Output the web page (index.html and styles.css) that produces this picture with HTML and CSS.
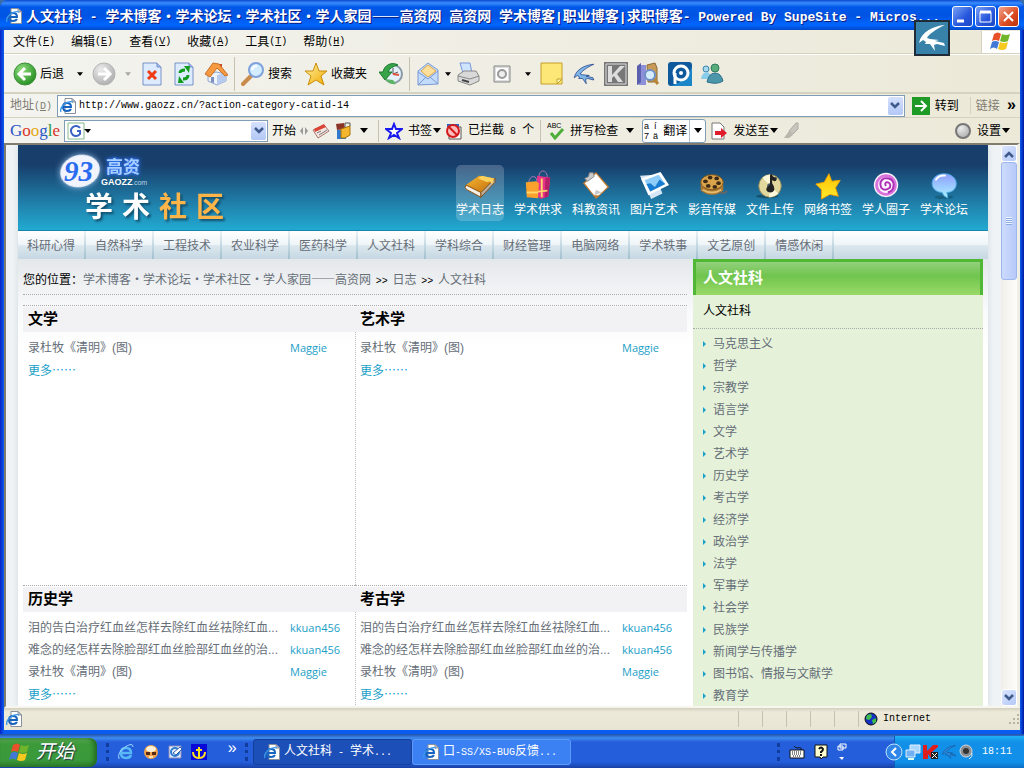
FILE: index.html
```html
<!DOCTYPE html>
<html lang="zh-CN">
<head>
    <meta charset="UTF-8">
    <meta name="viewport" content="width=device-width, initial-scale=1.0">
    <title>人文社科 - 学术博客</title>
    <link rel="stylesheet" href="styles.css">
</head>
<body>
    <!-- shared icons -->
    <svg class="defs" width="0" height="0">
        <defs>
            <linearGradient id="gold" x1="0" y1="0" x2="1" y2="1"><stop offset="0" stop-color="#fff3a0"/><stop offset="1" stop-color="#f0a800"/></linearGradient>
            <linearGradient id="star" x1="0" y1="0" x2="0" y2="1"><stop offset="0" stop-color="#ffc400"/><stop offset="1" stop-color="#ffe92e"/></linearGradient>
            <linearGradient id="orange" x1="0" y1="0" x2="1" y2="1"><stop offset="0" stop-color="#f7b733"/><stop offset="1" stop-color="#c06c0a"/></linearGradient>
            <linearGradient id="sky" x1="0" y1="0" x2="0" y2="1"><stop offset="0" stop-color="#8f9dff"/><stop offset="1" stop-color="#a8f4ff"/></linearGradient>
            <radialGradient id="green" cx=".35" cy=".3" r=".8"><stop offset="0" stop-color="#8fdc7d"/><stop offset="1" stop-color="#1d8a1b"/></radialGradient>
            <radialGradient id="grey" cx=".35" cy=".3" r=".8"><stop offset="0" stop-color="#ececec"/><stop offset="1" stop-color="#a9a9a9"/></radialGradient>
            <symbol id="ie" viewBox="0 0 16 16">
                <path d="M5 .5h7l3.500 3.500v11.500H5z" fill="#fff" stroke="#8a8f9c"/>
                <path d="M12 .5v3.500h3.500z" fill="#c9cfdd" stroke="#8a8f9c"/>
                <path d="M3 9h8q0-4-4-4t-4 4 4 4q3 0 4-2" fill="none" stroke="#1663c0" stroke-width="2"/>
                <path d="M1 14C-1 9 7 2 13 4" fill="none" stroke="#3a97e8" stroke-width="1.300"/>
            </symbol>
            <symbol id="flag" viewBox="0 0 22 20">
                <path d="M4 3q4-3 7 0l-2 7q-4-2-7 0z" fill="#e8502a"/>
                <path d="M12 3q4 2 8 0l-2 7q-4 2-8 0z" fill="#71b52b"/>
                <path d="M2 11q3-2 7 0l-2 7q-3-3-7 0z" fill="#4379d6"/>
                <path d="M10 11q4 2 8 0l-2 7q-4 2-8 0z" fill="#f7c81e"/>
            </symbol>
            <symbol id="swallow" viewBox="0 0 32 32">
                <path d="M29 3C17 4 5 10 3 21l4-3 3 2-1 2 5 0 5 7-1-6 3-1 8 2-1-3-9-2 4-1-9-1-3-1C12 13 20 7 29 3z"/>
            </symbol>
            <symbol id="down" viewBox="0 0 8 5"><path d="M0 0h8L4 5z"/></symbol>
            <symbol id="chev" viewBox="0 0 10 8"><path d="M1 1l4 4 4-4" fill="none" stroke="#3f5a8c" stroke-width="2.500"/></symbol>
        </defs>
    </svg>

    <div class="window">
        <header class="titlebar">
            <svg class="i16"><use href="#ie"/></svg>
            <h1>人文社科<span class="tl"> - </span>学术博客・学术论坛・学术社区・学人家园——高资网<span class="tl"> </span>高资网<span class="tl"> </span>学术博客<span class="tl">|</span>职业博客<span class="tl">|</span>求职博客<span class="tl">- Powered By SupeSite - Micros...</span></h1>
            <div class="win-buttons">
                <button aria-label="最小化"><svg width="19" height="19"><path d="M4 14h7" stroke="#fff" stroke-width="3"/></svg></button>
                <button aria-label="最大化"><svg width="19" height="19"><path d="M4 5h11v10H4z" fill="none" stroke="#fff"/><path d="M4 5h11" stroke="#fff" stroke-width="3"/></svg></button>
                <button class="close" aria-label="关闭"><svg width="19" height="19"><path d="M5 5l9 9M14 5l-9 9" stroke="#fff" stroke-width="2"/></svg></button>
            </div>
        </header>
        <div class="bird"><svg width="32" height="32" fill="#fff"><use href="#swallow"/></svg></div>

        <nav class="menubar">
            <button>文件<span class="l">(<u>F</u>)</span></button>
            <button>编辑<span class="l">(<u>E</u>)</span></button>
            <button>查看<span class="l">(<u>V</u>)</span></button>
            <button>收藏<span class="l">(<u>A</u>)</span></button>
            <button>工具<span class="l">(<u>T</u>)</span></button>
            <button>帮助<span class="l">(<u>H</u>)</span></button>
            <div class="throbber"><svg width="22" height="20"><use href="#flag"/></svg></div>
        </nav>

        <div class="toolbar">
            <button class="text"><svg class="i24"><circle cx="12" cy="12" r="11" fill="url(#green)" stroke="#3c8f38"/><path d="M18 12H7M12 6l-6 6 6 6" fill="none" stroke="#fff" stroke-width="3"/></svg>后退</button>
            <button class="arrow" aria-label="后退列表"><svg width="6" height="4"><use href="#down"/></svg></button>
            <button aria-label="前进"><svg class="i24"><circle cx="12" cy="12" r="11" fill="url(#grey)" stroke="#b5b5b5"/><path d="M6 12h11M12 6l6 6-6 6" fill="none" stroke="#fff" stroke-width="3"/></svg></button>
            <button class="arrow off" aria-label="前进列表"><svg width="6" height="4"><use href="#down"/></svg></button>
            <button aria-label="停止"><svg class="i24"><path d="M3 1h14l4 4v18H3z" fill="#dcebff" stroke="#7a90c8"/><path d="M17 1v4h4" fill="#9db9ee" stroke="#7a90c8"/><path d="M8 9l8 8M16 9l-8 8" stroke="#f03a12" stroke-width="3"/></svg></button>
            <button aria-label="刷新"><svg class="i24"><path d="M3 1h14l4 4v18H3z" fill="#dcebff" stroke="#7a90c8"/><path d="M17 1v4h4" fill="#9db9ee" stroke="#7a90c8"/><path d="M8 11q0-3 5-3M16 13q0 4-5 4" fill="none" stroke="#119c1a" stroke-width="3"/><path d="M12 4l6 0-1 7zM12 21l-6 0 1-7z" fill="#119c1a"/></svg></button>
            <button aria-label="主页"><svg class="i24"><path d="M15 2h3v7h-3z" fill="#c8452f"/><path d="M4 12l8-2 10 2v7l-9 4-9-4z" fill="#eef3fc" stroke="#8ea5d3"/><path d="M13 13l9-2v8l-9 4z" fill="#b8cbee"/><path d="M1 12L9 1l6 1 9 11-3 1-8-8-7 9z" fill="#f59a41" stroke="#c9702a"/><path d="M7 15h3v6l-3-1z" fill="#7d91bd"/></svg></button>
            <span class="sep"></span>
            <button class="text"><svg class="i24"><path d="M10 14l-8 8" stroke="#c98b4c" stroke-width="4" stroke-linecap="round"/><circle cx="15" cy="8" r="7" fill="#d3edff" stroke="#7fa2dc" stroke-width="2"/><path d="M11 8q1-4 5-4" fill="none" stroke="#fff" stroke-width="2"/></svg>搜索</button>
            <button class="text"><svg class="i24"><path d="M12 1l3 8 8 0-6 5 3 9-8-5-8 5 3-9-6-5 8 0z" fill="url(#gold)" stroke="#c98d0a"/></svg>收藏夹</button>
            <button aria-label="历史"><svg class="i24"><circle cx="14" cy="12" r="9" fill="#e4f1fb" stroke="#8b9aa7" stroke-width="2"/><path d="M14 6v6l5-2" fill="none" stroke="#555"/><path d="M14 12l6 1" stroke="#e0523a" stroke-width="2"/><path d="M19 3A10 10 0 0 0 4 10H0l6 8 7-8H9q2-5 10-7z" fill="#37a44a" stroke="#1d7a30"/><path d="M6 17q4 6 11 5l-3-4z" fill="#5bb565"/></svg></button>
            <span class="sep"></span>
            <button aria-label="邮件"><svg class="i24"><path d="M2 9L12 1l10 7v14L2 23z" fill="#c4dcfb" stroke="#7b98d4"/><path d="M5 9l7-6 8 6-8 6z" fill="#ffe09a" stroke="#e0a845"/><path d="M2 10l10 7L22 9M2 23l8-8M22 22l-8-7" fill="none" stroke="#7b98d4"/></svg></button>
            <button class="arrow slim" aria-label="邮件列表"><svg width="6" height="4"><use href="#down"/></svg></button>
            <button aria-label="打印"><svg class="i24"><path d="M4 1h10l2 10H7z" fill="#cfe4ff" stroke="#7795d8"/><path d="M2 13l6-4h12l3 5v5l-9 4-12-4z" fill="#d9d9d9" stroke="#888"/><path d="M2 14l12 3 9-3" fill="none" stroke="#888"/><path d="M6 18l7 2" stroke="#444" stroke-width="2"/></svg></button>
            <button class="wide" aria-label="编辑"><svg class="i24"><path d="M4 4h16v16H4z" fill="#dedede" stroke="#888"/><path d="M6 6h12v12H6z" fill="#fff"/><circle cx="12" cy="12" r="4" fill="#eee" stroke="#999" stroke-width="2"/></svg></button>
            <button class="arrow" aria-label="编辑列表"><svg width="6" height="4"><use href="#down"/></svg></button>
            <button aria-label="便笺"><svg class="i24"><path d="M1 1h21v21H1z" fill="#fde777" stroke="#c59e28"/><path d="M17 22v-5h5z" fill="#fff6bd" stroke="#c59e28"/></svg></button>
            <button aria-label="飞燕"><svg class="i24" fill="#7fb6e8" stroke="#1f3f87" stroke-width="1"><use href="#swallow"/></svg></button>
            <button aria-label="卡巴斯基"><svg class="i24"><path d="M1 1h22v22H1z" fill="#777" stroke="#777" stroke-width="2"/><path d="M2 2h20v20H2z" fill="none" stroke="#ddd"/><path d="M4 4h4v9l8-9h5l-8 8 6 8h-5l-4-6-2 2v4H4z" fill="#ddd"/></svg></button>
            <button aria-label="参考资料"><svg class="i24"><path d="M1 4l4-3v20l-4 2z" fill="#5a5fae"/><path d="M5 3h5v20H2l3-3z" fill="#8d90d8"/><path d="M11 3l8-2 2 5v14h-9z" fill="#c79a55" stroke="#8b6a34"/><path d="M17 16l5 6" stroke="#b9853b" stroke-width="3"/><circle cx="14" cy="13" r="5" fill="#d5ecff" stroke="#6c8fc6" stroke-width="2"/></svg></button>
            <button aria-label="PP"><svg class="i24"><rect width="24" height="24" rx="3" fill="#0f5a9c"/><path d="M2 24q14-3 22-19v19z" fill="#1c86c9"/><circle cx="13" cy="11" r="7" fill="none" stroke="#fff" stroke-width="3"/><circle cx="13" cy="11" r="2" fill="#fff"/><path d="M7 11v11" stroke="#fff" stroke-width="3"/></svg></button>
            <button aria-label="Messenger"><svg class="i24"><circle cx="6" cy="7" r="3" fill="#a5d8ee" stroke="#3a84a8"/><path d="M1 17q1-7 6-7 4 1 4 7z" fill="#8acdea"/><circle cx="15" cy="6" r="4" fill="#58ad7a" stroke="#2d7a5f"/><path d="M7 20q2-9 8-9 6 0 8 8-6 4-16 1z" fill="#4b96a8" stroke="#2e6f8d"/></svg></button>
        </div>

        <form class="address">
            <label for="url">地址<span class="l">(<u>D</u>)</span></label>
            <div class="combo">
                <svg class="i16"><use href="#ie"/></svg>
                <input type="text" id="url" value="http://www.gaozz.cn/?action-category-catid-14">
                <button type="button" aria-label="地址列表"><svg width="10" height="8"><use href="#chev"/></svg></button>
            </div>
            <button type="button" class="go"><svg width="18" height="18"><rect width="18" height="18" fill="#1f9a27"/><path d="M3 9h10M9 4l5 5-5 5" fill="none" stroke="#fff" stroke-width="2"/></svg>转到</button>
            <div class="links">链接 <b>»</b></div>
        </form>

        <div class="google">
            <label class="glogo" for="gq"><i>G</i><i>o</i><i>o</i><i>g</i><i>l</i><i>e</i></label>
            <div class="combo">
                <svg width="24" height="18"><path d="M1 1h16v16H1z" fill="#fff" stroke="#86b98b"/><path d="M13 6a5 5 0 1 0 0 6V9h-3" fill="none" stroke="#3a62c4" stroke-width="2"/><path d="M17 7h7l-3 4z"/></svg>
                <input type="text" id="gq">
                <button type="button" aria-label="搜索历史"><svg width="10" height="8"><use href="#chev"/></svg></button>
            </div>
            <button>开始</button>
            <svg width="8" height="8"><path d="M3 0v8L0 4zM5 0v8l3-4z" fill="#999"/></svg>
            <button aria-label="新闻"><svg class="i18"><path d="M1 8l11-5 5 6-11 7z" fill="#f5e4df" stroke="#a8766f"/><path d="M2 7l10-5 2 3-11 5z" fill="#d94436"/><path d="M7 13l8-5M5 11l4-2" stroke="#777"/></svg></button>
            <button aria-label="小工具"><svg class="i18"><path d="M2 2l8-1 1 6-8 1z" fill="#8c3426"/><path d="M3 8h9v9H3z" fill="#2f7ad0"/><path d="M7 7l9-3v9l-5 3H7z" fill="#f4b62c" stroke="#a8720b"/><path d="M11 5V1h5v3" fill="none" stroke="#555"/></svg></button>
            <button class="arrow" aria-label="更多工具"><svg width="8" height="5"><use href="#down"/></svg></button>
            <span class="sep"></span>
            <button><svg class="i18"><path d="M9 2l2 5 6 0-5 4 2 5-5-3-5 3 2-5-5-4 6 0z" fill="#fff" stroke="#1a1aee" stroke-width="2"/></svg><span>书签<svg width="8" height="5"><use href="#down"/></svg></span></button>
            <button><svg class="i18"><path d="M2 2h12v3H2z" fill="#2f62c0"/><path d="M4 5h12v12H4z" fill="#fff" stroke="#555"/><circle cx="8" cy="9" r="6" fill="#fbb" stroke="#d31b1b" stroke-width="2"/><path d="M4 5l8 8" stroke="#d31b1b" stroke-width="2"/></svg><span>已拦截<span class="l"> 8 </span>个</span></button>
            <span class="sep"></span>
            <button><svg class="i18"><text x="0" y="6" font-size="7" font-family="Liberation Sans">ABC</text><path d="M4 11l4 5 8-9" fill="none" stroke="#4fae3a" stroke-width="3"/></svg>拼写检查</button>
            <button class="arrow" aria-label="拼写选项"><svg width="8" height="5"><use href="#down"/></svg></button>
            <div class="translate">
                <button><svg class="i18"><g font-size="9" font-family="Liberation Sans"><text x="1" y="7">a</text><text x="11" y="7">í</text><text x="1" y="17">7</text><text x="10" y="17">ä</text></g></svg>翻译</button>
                <button class="arrow" aria-label="翻译选项"><svg width="8" height="5"><use href="#down"/></svg></button>
            </div>
            <button><svg class="i18"><path d="M2 1h8l4 4v12H2z" fill="#fff" stroke="#777"/><path d="M5 9h6V6l6 5-6 5v-3H5z" fill="#e01b2c"/></svg><span>发送至<svg width="8" height="5"><use href="#down"/></svg></span></button>
            <button aria-label="突出显示"><svg class="i18"><path d="M14 1h2v6l-5 5-4-3z" fill="#c8c5bb" stroke="#aaa"/><path d="M7 9l4 4-4 3H2z" fill="#b9b6ac"/></svg></button>
            <button class="settings"><svg class="i18"><circle cx="9" cy="9" r="7" fill="url(#grey)" stroke="#777" stroke-width="2"/></svg><span>设置<svg width="8" height="5"><use href="#down"/></svg></span></button>
        </div>

        <div class="viewport">
            <main class="page">
                <div class="banner">
                    <svg class="logo" width="180" height="76">
                        <ellipse class="oval" cx="25" cy="22" rx="20" ry="16" transform="rotate(-15 25 22)"/>
                        <text class="gz" x="9" y="32">93</text>
                        <text class="cn" x="51" y="24">高资</text>
                        <text class="en" x="46" y="36">GAOZZ</text>
                        <text class="com" x="77" y="36">.com</text>
                        <text class="big" x="30" y="68">学</text>
                        <text class="big" x="67" y="68">术</text>
                        <text class="big warm" x="104" y="68">社</text>
                        <text class="big warm" x="141" y="68">区</text>
                    </svg>
                    <nav class="channels">
                        <a class="on" href="#"><svg viewBox="0 0 34 32"><path d="M2 16l14-10 17 3-15 15z" fill="url(#orange)"/><path d="M2 16q-2 3 1 5l15 8v-5z" fill="#f4efe6" stroke="#8a4b06"/><path d="M18 24L33 9v4L18 29z" fill="#b8b0a4" stroke="#8a4b06"/><path d="M19 6l13 3-2 6-3-3-2 1-10-4z" fill="#fbd25d"/></svg>学术日志</a>
                        <a href="#"><svg viewBox="0 0 34 32"><path d="M18 9q0-8 4-8 5 0 5 8M7 14q1-7 5-7t4 7" fill="none" stroke="#b07ab0"/><path d="M16 6l14 2-2 20-8 3-4-3z" fill="#e8338a"/><path d="M25 8l5 0-2 20-4 2z" fill="#b51f68"/><path d="M4 13l11-1 3 2-1 16-12-1z" fill="#f9a12c"/><path d="M5 24h12M17 23l10-1M21 9v20" stroke="#ffd76b" stroke-width="2"/></svg>学术供求</a>
                        <a href="#"><svg viewBox="0 0 34 32"><path d="M3 14L17 2l14 16-14 13z" fill="#c07a30"/><path d="M5 14L17 4l12 14-9 9-5 0z" fill="#fff"/><path d="M15 27l2-6 6 3z" fill="#c9c9c9"/><path d="M5 9l4-2 1-4 4 0 1 4-7 5z" fill="#ccc" stroke="#888"/></svg>科教资讯</a>
                        <a href="#"><svg viewBox="0 0 34 32"><path d="M2 6l16-1 8 20-12 6z" fill="#d5e5f5"/><path d="M3 9l21-7 9 14-22 11z" fill="#fff"/><path d="M7 11l15-6 7 10-16 8z" fill="#8ecdfa"/><path d="M9 15l4-1 5 4 5-8 6 5-16 8z" fill="#187bd2"/></svg>图片艺术</a>
                        <a href="#"><svg viewBox="0 0 34 32"><path d="M5 13v9q12 9 24 0v-9z" fill="#a87731"/><path d="M7 21q10 6 20 0" fill="none" stroke="#e5bb6e" stroke-width="2"/><ellipse cx="17" cy="13" rx="12" ry="8" fill="#daa44c" stroke="#80551b"/><g fill="#3c2b16"><ellipse cx="10" cy="12" rx="2.500" ry="2"/><ellipse cx="15" cy="8" rx="2.500" ry="2"/><ellipse cx="22" cy="9" rx="2.500" ry="2"/><ellipse cx="24" cy="14" rx="2.500" ry="2"/><ellipse cx="13" cy="17" rx="2.500" ry="2"/><ellipse cx="20" cy="18" rx="2.500" ry="2"/></g><path d="M25 24q6 2 8-2" fill="none" stroke="#666" stroke-width="2"/></svg>影音传媒</a>
                        <a href="#"><svg viewBox="0 0 34 32"><ellipse cx="14" cy="28" rx="12" ry="2" fill="#14506e"/><circle cx="17" cy="17" r="12" fill="#e2d79c" stroke="#8f8859"/><path d="M17 17L9 8q5-4 10-3zM17 17l9 8q-5 4-10 4z" fill="#fbf7d8"/><circle cx="17" cy="17" r="3" fill="#456"/><path d="M17 5l2-1q0 4 5 4 1 3-2 4l-3-1q0 4 2 6 2 6-3 7-5 0-5-4 1-3 4-4z" fill="#222"/></svg>文件上传</a>
                        <a href="#"><svg viewBox="0 0 34 32"><path d="M18 4l3 8 9-1-5 8 3 9-9-2-9 5 0-10-6-6 9-2z" fill="url(#star)" stroke="#f0a000"/></svg>网络书签</a>
                        <a href="#"><svg viewBox="0 0 34 32"><circle cx="17" cy="16" r="13" fill="#fbf4fd"/><circle cx="17" cy="16" r="10" fill="none" stroke="#d873dc" stroke-width="3"/><path d="M17 17q-2-3 1-4 5 1 3 6-5 4-9 0-3-7 3-10 8-1 10 5 1 8-6 10" fill="none" stroke="#ad2db6" stroke-width="2"/></svg>学人圈子</a>
                        <a href="#"><svg viewBox="0 0 34 32"><ellipse cx="17" cy="29" rx="10" ry="2" fill="#17607f"/><path d="M17 4c17 0 17 20 3 20q1 3 1 6-5-2-6-6C0 23 1 4 17 4z" fill="url(#sky)" stroke="#4ba7e8"/><path d="M8 11q3-6 11-5" fill="none" stroke="#fff" stroke-width="2"/></svg>学术论坛</a>
                    </nav>
                </div>

                <nav class="subnav">
                    <a href="#">科研心得</a><a href="#">自然科学</a><a href="#">工程技术</a><a href="#">农业科学</a><a href="#">医药科学</a><a href="#">人文社科</a><a href="#">学科综合</a><a href="#">财经管理</a><a href="#">电脑网络</a><a href="#">学术轶事</a><a href="#">文艺原创</a><a href="#">情感休闲</a>
                </nav>

                <div class="columns">
                    <div class="content">
                        <p class="crumbs">您的位置：<a href="#">学术博客・学术论坛・学术社区・学人家园——高资网</a> <span>&gt;&gt;</span> <a href="#">日志</a> <span>&gt;&gt;</span> <a href="#">人文社科</a></p>

                        <div class="blocks">
                            <section>
                                <h3>文学</h3>
                                <ul>
                                    <li><a href="#">录杜牧《清明》(图)</a><a class="user" href="#">Maggie</a></li>
                                    <li><a class="more" href="#">更多……</a></li>
                                </ul>
                            </section>
                            <section>
                                <h3>艺术学</h3>
                                <ul>
                                    <li><a href="#">录杜牧《清明》(图)</a><a class="user" href="#">Maggie</a></li>
                                    <li><a class="more" href="#">更多……</a></li>
                                </ul>
                            </section>
                            <section>
                                <h3>历史学</h3>
                                <ul>
                                    <li><a href="#">泪的告白治疗红血丝怎样去除红血丝祛除红血...</a><a class="user" href="#">kkuan456</a></li>
                                    <li><a href="#">难念的经怎样去除脸部红血丝脸部红血丝的治...</a><a class="user" href="#">kkuan456</a></li>
                                    <li><a href="#">录杜牧《清明》(图)</a><a class="user" href="#">Maggie</a></li>
                                    <li><a class="more" href="#">更多……</a></li>
                                </ul>
                            </section>
                            <section>
                                <h3>考古学</h3>
                                <ul>
                                    <li><a href="#">泪的告白治疗红血丝怎样去除红血丝祛除红血...</a><a class="user" href="#">kkuan456</a></li>
                                    <li><a href="#">难念的经怎样去除脸部红血丝脸部红血丝的治...</a><a class="user" href="#">kkuan456</a></li>
                                    <li><a href="#">录杜牧《清明》(图)</a><a class="user" href="#">Maggie</a></li>
                                    <li><a class="more" href="#">更多……</a></li>
                                </ul>
                            </section>
                        </div>
                    </div>

                    <aside class="sidebar">
                        <h2>人文社科</h2>
                        <p>人文社科</p>
                        <ul>
                            <li><a href="#">马克思主义</a></li>
                            <li><a href="#">哲学</a></li>
                            <li><a href="#">宗教学</a></li>
                            <li><a href="#">语言学</a></li>
                            <li><a href="#">文学</a></li>
                            <li><a href="#">艺术学</a></li>
                            <li><a href="#">历史学</a></li>
                            <li><a href="#">考古学</a></li>
                            <li><a href="#">经济学</a></li>
                            <li><a href="#">政治学</a></li>
                            <li><a href="#">法学</a></li>
                            <li><a href="#">军事学</a></li>
                            <li><a href="#">社会学</a></li>
                            <li><a href="#">民族学</a></li>
                            <li><a href="#">新闻学与传播学</a></li>
                            <li><a href="#">图书馆、情报与文献学</a></li>
                            <li><a href="#">教育学</a></li>
                        </ul>
                    </aside>
                </div>
            </main>
            <div class="scrollbar">
                <button class="up" aria-label="向上"><svg width="10" height="8"><use href="#chev"/></svg></button>
                <div class="thumb"></div>
                <button aria-label="向下"><svg width="10" height="8"><use href="#chev"/></svg></button>
            </div>
        </div>

        <footer class="status">
            <svg class="i16"><use href="#ie"/></svg>
            <span class="cells"><i></i><i></i><i></i><i></i><i></i></span>
            <div class="zone">
                <svg width="14" height="14"><circle cx="7" cy="7" r="6" fill="#1330c0" stroke="#111"/><path d="M3 3l4-1 1 3-3 3-3-1zM8 8l4-2 0 4-3 2z" fill="#3fc04a"/></svg>
                <span class="l">Internet</span>
            </div>
            <svg width="12" height="12"><g fill="#b8b4a2"><path d="M9 1h2v2H9zM5 5h2v2H5zM9 5h2v2H9zM1 9h2v2H1zM5 9h2v2H5zM9 9h2v2H9z"/></g></svg>
        </footer>
    </div>

    <div class="taskbar">
        <button class="start"><svg width="22" height="20"><use href="#flag"/></svg>开始</button>
        <div class="quick">
            <span class="grip"></span>
            <button aria-label="Internet Explorer"><svg class="i16"><path d="M3 9h10q0-5-5-5T3 9t5 5q4 0 5-3" fill="none" stroke="#58b7f5" stroke-width="2.500"/><path d="M1 15Q-1 8 7 3t8 0" fill="none" stroke="#9bd8fb"/></svg></button>
            <button aria-label="QQ"><svg class="i16"><circle cx="8" cy="8" r="7" fill="#f0a24c"/><ellipse cx="8" cy="5" rx="5" ry="3" fill="#fff2d8"/><path d="M3 8h4v3H3zM9 8h4v3H9z" fill="#5a2b12"/><path d="M6 12h4v2H6z" fill="#fbe0b0"/></svg></button>
            <button aria-label="Outlook Express"><svg class="i16"><path d="M2 2h12v12H2z" fill="#e5effd" stroke="#88b"/><circle cx="8" cy="8" r="4" fill="none" stroke="#2d7bd0" stroke-width="2"/><path d="M6 9l7-6 2 2-6 6z" fill="#fff" stroke="#2d5fb0"/></svg></button>
            <button aria-label="Anchor"><svg class="i16"><path d="M0 0h16v16H0z" fill="#0808d8"/><path d="M8 3v11M5 6h6M2 8q0 6 6 6t6-6" fill="none" stroke="#ffe21f" stroke-width="2"/></svg></button>
            <b>»</b>
            <span class="grip"></span>
        </div>
        <button class="task active"><svg class="i16"><use href="#ie"/></svg><span>人文社科<span class="l"> - </span>学术<span class="l">...</span></span></button>
        <button class="task"><svg class="i16"><use href="#ie"/></svg><span>口<span class="l">-SS/XS-BUG</span>反馈<span class="l">...</span></span></button>
        <div class="lang">
            <span class="grip"></span>
            <svg class="i16"><path d="M1 6h14v8H1z" fill="#fff" stroke="#111"/><path d="M3 8h10M3 10h10M4 12h8" stroke="#111" stroke-dasharray="1 1"/><path d="M12 6q1-3-3-2-3 0-4-2" fill="none" stroke="#111"/></svg>
            <svg class="i16"><path d="M2 1h12v12h-4l-2 2-1-2H2z" fill="#ffffd0" stroke="#111"/><path d="M6 5q2-3 4 0 0 2-2 3v1M8 10v2" fill="none" stroke="#111" stroke-width="2"/></svg>
            <svg width="10" height="18"><path d="M3 1h6v4H3zM1 3h5v4H1z" fill="#2a62dc" stroke="#fff"/><path d="M2 14h5l-2 3z" fill="#fff"/></svg>
        </div>
        <div class="tray">
            <button aria-label="显示隐藏图标"><svg width="18" height="18"><circle cx="9" cy="9" r="8" fill="#2f86e8" stroke="#bfe2ff"/><path d="M11 5L7 9l4 4" fill="none" stroke="#fff" stroke-width="2"/></svg></button>
            <svg class="i16"><path d="M5 1h10v8H5z" fill="#a9d6ff" stroke="#dfefff"/><path d="M1 6h9v7H1z" fill="#6fb1f2" stroke="#dfefff"/><path d="M3 15h6" stroke="#dfe" stroke-width="2"/></svg>
            <svg class="i16"><path d="M0 1h4v6l6-6h5v2L9 8l5 7H9l-4-5v5H0z" fill="#e01c1c"/><path d="M8 8h7v7H8z" fill="#222"/><path d="M9 9l5 5M14 9l-5 5" stroke="#fff"/></svg>
            <svg class="i16" fill="#2a86d8" stroke="#104f8c"><use href="#swallow"/></svg>
            <svg class="i16"><circle cx="7" cy="7" r="6" fill="#8b8f93" stroke="#d5d8da"/><circle cx="7" cy="7" r="3" fill="#333"/><path d="M13 9q1 4-3 6" fill="none" stroke="#eee"/></svg>
            <span class="l clock">18:11</span>
        </div>
    </div>
</body>
</html>
```

FILE: styles.css
```css
* {
    box-sizing: border-box;
}

body {
    margin: 0;
    height: 100vh;
    display: flex;
    flex-direction: column;
    overflow: hidden;
    background: #3b6ea5;
    font-family: "Liberation Sans", "Noto Sans CJK SC", sans-serif;
    font-size: 12px;
    line-height: 16px;
    color: #000;
}

h1, h2, h3, p, ul {
    margin: 0;
    padding: 0;
}

ul {
    list-style: none;
}

a {
    color: #666e78;
    text-decoration: none;
}

button {
    display: flex;
    align-items: center;
    padding: 0;
    border: 0;
    background: none;
    font: inherit;
    color: inherit;
    white-space: nowrap;
}

svg {
    flex: none;
}

.defs {
    position: absolute;
}

.i16 { width: 16px; height: 16px; }
.i18 { width: 18px; height: 18px; }
.i24 { width: 24px; height: 24px; }

/* narrow system latin */
.l {
    font-family: "Liberation Mono", monospace;
    font-size: 10px;
    white-space: pre;
}

/* window frame */
.window {
    flex: 1;
    min-height: 0;
    position: relative;
    display: flex;
    flex-direction: column;
    padding: 0 4px 4px;
    background: linear-gradient(90deg, #0a22c4, #0a5cf0 4px, #0a5cf0 calc(100% - 4px), #0018a0);
    border-radius: 8px 8px 0 0;
}

.titlebar {
    height: 30px;
    margin: 0 -4px;
    padding: 2px 5px 0 6px;
    display: flex;
    align-items: center;
    gap: 4px;
    border-radius: 8px 8px 0 0;
    background: linear-gradient(#0a4ad0, #3a8cff 3px, #0058e8 7px, #0054e3 16px, #0066ff 25px, #0148c8);
    color: #fff;
}

.titlebar h1 {
    flex: 1;
    overflow: hidden;
    white-space: nowrap;
    font-family: "Noto Sans CJK SC", sans-serif;
    font-size: 14px;
    line-height: 20px;
    font-weight: bold;
    text-shadow: 1px 1px #0a1a80;
}

.tl {
    font-family: "Liberation Mono", monospace;
    font-size: 13px;
    white-space: pre;
}

.win-buttons {
    display: flex;
    gap: 2px;
}

.win-buttons button {
    width: 21px;
    height: 21px;
    border: 1px solid #fff;
    border-radius: 3px;
    background: linear-gradient(135deg, #7aa2f5, #2555dc 60%, #1d48c4);
}

.win-buttons .close {
    background: linear-gradient(135deg, #f0a48c, #dc4a20 60%, #b8350f);
}

.bird {
    position: absolute;
    top: 20px;
    right: 74px;
    width: 36px;
    height: 36px;
    border: 2px solid #1f2c38;
    background: #3882aa;
}

.menubar, .toolbar, .address, .google, .status {
    display: flex;
    align-items: center;
    background: linear-gradient(90deg, #f3f3ef, #ece9d8);
}

.menubar {
    height: 24px;
    padding-left: 1px;
    border-bottom: 1px solid #d6d2c0;
}

.menubar button {
    padding: 0 8px;
}

.throbber {
    margin-left: auto;
    width: 39px;
    height: 22px;
    display: flex;
    justify-content: center;
    background: #fff;
    border-left: 1px solid #d6d2c0;
}

.toolbar {
    height: 40px;
    padding-left: 5px;
    border-top: 1px solid #fff;
    border-bottom: 2px solid #d6d2c0;
}

.toolbar button {
    padding: 0 4px;
}

.toolbar .text {
    gap: 3px;
    padding-right: 8px;
}

.toolbar .wide {
    padding: 0 6px;
}

.toolbar .arrow, .google .arrow {
    width: 16px;
    padding: 0;
    justify-content: center;
}

.toolbar .slim {
    width: 8px;
}

.off {
    opacity: 0.3;
}

.sep {
    width: 1px;
    height: 34px;
    margin: 0 2px;
    background: #c5c2b0;
}

.address {
    height: 24px;
    padding: 0 4px 0 6px;
    border-bottom: 1px solid #d6d2c0;
    gap: 5px;
}

.address label, .links {
    color: #7f7c73;
}

.combo {
    display: flex;
    align-items: center;
    height: 22px;
    padding: 1px 1px 1px 2px;
    background: #fff;
    border: 1px solid #7f9db9;
}

.address .combo {
    flex: 1;
}

.combo input {
    flex: 1;
    min-width: 0;
    padding: 0 3px;
    border: 0;
    outline: 0;
    background: none;
    font-family: "Liberation Mono", monospace;
    font-size: 10px;
}

.combo button {
    width: 15px;
    height: 18px;
    justify-content: center;
    background: linear-gradient(#d5e0fd, #b3c8f6);
    border-radius: 2px;
}

.go {
    gap: 5px;
    padding: 0 6px 0 2px;
}

.links {
    padding-left: 5px;
    border-left: 1px solid #d6d2c0;
}

.links b {
    margin-left: 4px;
    font-size: 16px;
    color: #000;
}

.google {
    height: 25px;
    padding: 0 10px 0 6px;
    gap: 4px;
}

.google button {
    gap: 5px;
}

.google span svg {
    margin-left: 1px;
    vertical-align: 2px;
}

.google .combo {
    width: 204px;
}

.google .sep {
    height: 22px;
}

.glogo {
    font-family: "Liberation Serif", serif;
    font-size: 17px;
}

.glogo i {
    font-style: normal;
    color: #2a56c6;
}

.glogo i:nth-child(2), .glogo i:nth-child(6) { color: #d8352a; }
.glogo i:nth-child(3) { color: #e5a812; }
.glogo i:nth-child(5) { color: #2c9a3c; }

.translate {
    display: flex;
    height: 24px;
    background: #fff;
    border: 1px solid #7f9db9;
    border-radius: 3px;
}

.translate button {
    gap: 2px;
}

.translate .arrow {
    margin-left: 2px;
    border-left: 1px solid #aec0d2;
}

.settings {
    margin-left: auto;
}

/* page area */
.viewport {
    flex: 1;
    min-height: 0;
    display: flex;
    overflow: hidden;
    border-top: 2px solid #807d70;
    border-left: 2px solid #807d70;
    border-right: 3px solid #f0efe6;
    border-bottom: 2px solid #f6f5ee;
    background: #eff3f6;
}

.page {
    flex: 1;
    min-width: 0;
    margin: 0 13px 0 12px;
    background: #fff;
    box-shadow: 0 0 6px #cfdade;
}

.banner {
    height: 86px;
    padding: 0 20px 0 37px;
    display: flex;
    justify-content: space-between;
    background: linear-gradient(#183f6c, #183f6c 20px, #2086b0 62px, #22a8d0 84px);
    border-bottom: 1px solid #1886ac;
}

.logo {
    margin-top: 4px;
}

.oval {
    fill: #f1f4fc;
    filter: drop-shadow(0 0 3px #9cc4ee);
}

.logo text {
    font-family: "Noto Sans CJK SC", sans-serif;
    font-weight: bold;
}

.logo .gz {
    font-family: "Liberation Serif", serif;
    font-style: italic;
    font-size: 29px;
    fill: #2a6cf0;
}

.logo .cn {
    font-size: 17px;
    fill: #a8d0ff;
    filter: drop-shadow(0 0 1px #2f6ff0) drop-shadow(0 0 2px #2f6ff0);
}

.logo .en {
    font-family: "Liberation Sans", sans-serif;
    font-size: 9px;
    fill: #fff;
}

.logo .com {
    font-family: "Liberation Sans", sans-serif;
    font-weight: normal;
    font-size: 7px;
    fill: #b9d3e6;
}

.logo .big {
    font-size: 28px;
    fill: #fff;
    filter: drop-shadow(2px 2px 1px #12506f);
}

.logo .warm {
    fill: #fdb549;
}

.channels {
    display: flex;
    gap: 10px;
    padding-top: 20px;
}

.channels a {
    width: 48px;
    height: 56px;
    padding-top: 5px;
    display: flex;
    flex-direction: column;
    align-items: center;
    gap: 2px;
    color: #fff;
    white-space: nowrap;
}

.channels .on {
    background: rgba(255, 255, 255, 0.2);
    border-radius: 5px;
}

.channels svg {
    width: 32px;
    height: 30px;
}

.subnav {
    display: flex;
    height: 28px;
    background: linear-gradient(#fff, #eef4f7 50%, #dce7ee 52%, #c5d8e3);
}

.subnav a {
    padding: 0 9px;
    line-height: 30px;
    border-right: 2px solid #b4ccd8;
    border-image: linear-gradient(#eef3f6, #9dbfce) 1;
}

.columns {
    display: flex;
    gap: 6px;
    padding: 0 5px;
    background: linear-gradient(#e5e8eb, #f8f9fa 50px, #fff 90px);
}

.content {
    flex: 1;
    min-width: 0;
}

.crumbs {
    height: 36px;
    line-height: 40px;
    border-bottom: 1px dotted #aaa;
    white-space: nowrap;
    font-family: "Noto Sans CJK SC", sans-serif;
}

.crumbs span {
    margin: 0 2px;
    font-family: "Liberation Mono", monospace;
    font-size: 10px;
}

.blocks {
    display: grid;
    grid-template-columns: 1fr 1fr;
    margin-top: 10px;
}

.blocks section {
    min-height: 280px;
    display: flex;
    flex-direction: column;
    border-top: 1px dotted #aaa;
}

.blocks h3 {
    margin-top: 1px;
    height: 25px;
    padding-left: 5px;
    font-size: 15px;
    line-height: 24px;
    background: #f2f2f4;
}

.blocks ul {
    flex: 1;
    padding: 5px 4px 0 5px;
}

.blocks section:nth-child(even) ul {
    border-left: 1px dotted #bbb;
    padding-left: 4px;
}

.blocks li {
    display: flex;
    justify-content: space-between;
    line-height: 22px;
    white-space: nowrap;
}

.blocks .user {
    width: 61px;
    color: #1ba0c8;
    font-family: "Open Sans", sans-serif;
    font-size: 11px;
}

.more {
    color: #1ba0c8;
    font-family: "Noto Sans CJK SC", sans-serif;
}

.sidebar {
    width: 290px;
    background: #e5f2d9;
}

.sidebar h2 {
    height: 36px;
    padding-left: 7px;
    border: 3px solid #50b834;
    border-bottom: 0;
    font-size: 15px;
    line-height: 31px;
    color: #fff;
    background: linear-gradient(#93d07c, #70c54e 14px, #9ad968);
}

.sidebar p {
    padding-left: 10px;
    line-height: 33px;
    border-bottom: 1px dotted #aaa;
}

.sidebar ul {
    padding: 4px 10px;
}

.sidebar li {
    display: flex;
    align-items: center;
    line-height: 22px;
}

.sidebar li::before {
    content: "";
    width: 0;
    margin-right: 7px;
    border: 3px solid transparent;
    border-left-color: #1ba0c8;
    border-right: 0;
}

.scrollbar {
    width: 16px;
    display: flex;
    flex-direction: column;
    background: linear-gradient(90deg, #f1efe8, #fdfdfa);
}

.scrollbar button {
    height: 17px;
    justify-content: center;
    border: 1px solid #fff;
    border-radius: 3px;
    background: linear-gradient(135deg, #dbe5fe, #b3c8f6);
}

.scrollbar .up svg {
    transform: rotate(180deg);
}

.thumb {
    height: 118px;
    margin-bottom: auto;
    border: 1px solid #9db6ee;
    border-radius: 3px;
    background: repeating-linear-gradient(#eef4fe 0 1px, #8fabe6 1px 2px) center / 6px 8px no-repeat, linear-gradient(90deg, #cddbfd, #b6c9f8);
}

.status {
    height: 22px;
    padding-left: 2px;
    background: linear-gradient(#d2cfbf, #edeada 4px, #e8e5d4);
}

.cells {
    display: flex;
    margin-left: auto;
}

.cells i {
    width: 24px;
    height: 16px;
    border-left: 1px solid #c5c2b0;
}

.zone {
    width: 150px;
    display: flex;
    align-items: center;
    gap: 5px;
    padding-left: 5px;
    border-left: 1px solid #c5c2b0;
}

/* taskbar */
.taskbar {
    height: 34px;
    padding-top: 2px;
    display: flex;
    align-items: center;
    background: linear-gradient(#1f4fa8, #3f8cf0 4px, #245edb 8px, #245edb 28px, #1941a5);
    color: #fff;
}

.start {
    width: 97px;
    height: 29px;
    padding-left: 9px;
    gap: 5px;
    border-radius: 0 8px 8px 0;
    background: linear-gradient(#5eac56, #3c9a3a 6px, #3a993a 22px, #2f7d2c);
    box-shadow: inset -3px 0 4px #256b22;
    font-size: 19px;
    line-height: 24px;
    font-style: italic;
    text-shadow: 1px 1px 1px #234;
}

.quick {
    width: 156px;
    display: flex;
    align-items: center;
    justify-content: space-between;
    padding: 0 4px 0 9px;
}

.quick b {
    margin: 0 0 8px 12px;
    font-size: 16px;
    font-weight: normal;
}

.grip {
    width: 4px;
    height: 18px;
    border-left: 3px dotted #123c9c;
}

.task {
    width: 159px;
    height: 26px;
    padding-left: 10px;
    gap: 4px;
    border-radius: 3px;
    border: 1px solid #5f9bff;
    background: #3c81f3;
}

.task.active {
    border-color: #153f9c;
    background: #1c4fb8;
}

.lang {
    margin-left: auto;
    width: 70px;
    display: flex;
    align-items: center;
    justify-content: space-between;
}

.tray {
    width: 130px;
    height: 32px;
    margin-left: 47px;
    padding-right: 12px;
    display: flex;
    align-items: center;
    gap: 2px;
    border-left: 1px solid #0d5cb0;
    background: linear-gradient(#1fb0f6, #1290e8 6px, #1190ea 26px, #0d6fc4);
}

.tray button {
    margin-left: -10px;
}

.clock {
    margin-left: auto;
}
```
